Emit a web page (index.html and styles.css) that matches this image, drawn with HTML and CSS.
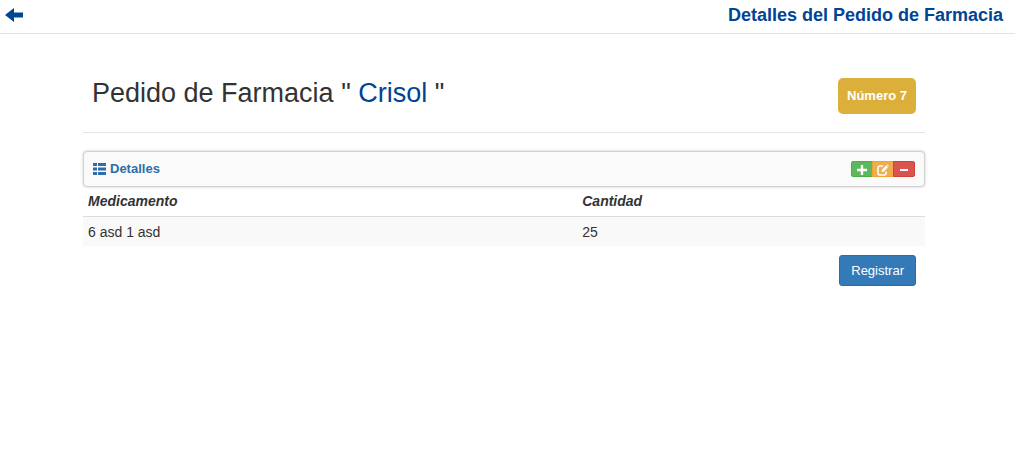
FILE: index.html
```
<!DOCTYPE html>
<html lang="es">
<head>
<meta charset="utf-8">
<title>Detalles del Pedido de Farmacia</title>
<link rel="stylesheet" href="styles.css">
</head>
<body>
<header class="topbar">
  <a class="back" href="#" aria-label="Volver">
    <svg width="18" height="14" viewBox="0 0 18 14" aria-hidden="true"><path d="M0 7L9 0V4.500H18V9.500H9V14Z" fill="currentColor"/></svg>
  </a>
  <h1 class="topbar-title">Detalles del Pedido de Farmacia</h1>
</header>
<main class="content">
  <div class="order-head">
    <h2 class="order-title">Pedido de Farmacia " <span class="order-name">Crisol</span> "</h2>
    <span class="order-number">Número 7</span>
  </div>
  <section class="panel">
    <h3 class="panel-title">
      <svg width="13" height="12" viewBox="0 0 13 12" aria-hidden="true"><path d="M0 0h4v3H0zM5 0h8v3H5zM0 4.500h4v3H0zM5 4.500h8v3H5zM0 9h4v3H0zM5 9h8v3H5z" fill="currentColor"/></svg>
      Detalles
    </h3>
    <div class="actions">
      <button type="button" class="action action-add" aria-label="Agregar"><svg width="12" height="12" viewBox="0 0 12 12" aria-hidden="true"><path d="M4.800 1h2.400v3.800H11v2.400H7.200V11H4.800V7.200H1V4.800h3.800z" fill="currentColor"/></svg></button>
      <button type="button" class="action action-edit" aria-label="Editar"><svg width="12" height="12" viewBox="0 0 12 12" aria-hidden="true"><path d="M6 2H3Q1 2 1 4v5q0 2 2 2h4q2 0 2-2V7.500" fill="none" stroke="currentColor" stroke-width="1.500"/><path d="M4.500 8l.6-2.500L9 1.600l1.900 1.900L7 7.400zM9.500 1.100l.7-.7 1.600 1.600-.6.700z" fill="currentColor"/></svg></button>
      <button type="button" class="action action-remove" aria-label="Quitar"><svg width="12" height="12" viewBox="0 0 12 12" aria-hidden="true"><path d="M2 5h8v2H2z" fill="currentColor"/></svg></button>
    </div>
  </section>
  <table class="items">
    <thead><tr><th class="col-name" scope="col">Medicamento</th><th scope="col">Cantidad</th></tr></thead>
    <tbody><tr><td>6 asd 1 asd</td><td>25</td></tr></tbody>
  </table>
  <div class="footer">
    <button type="submit" class="submit">Registrar</button>
  </div>
</main>
</body>
</html>
```
FILE: styles.css
```
* { box-sizing: border-box; }

body {
  margin: 0;
  background: #fff;
  color: #333;
  font: 14px/20px "Liberation Sans", Arial, sans-serif;
}

h1, h2, h3 { margin: 0; }

.topbar {
  display: flex;
  align-items: center;
  justify-content: space-between;
  padding: 5px 12px 8px 5px;
  border-bottom: 1px solid #e1e1e1;
}

.back {
  display: flex;
  color: #004494;
}

.topbar-title {
  color: #004494;
  font-size: 18px;
  line-height: 20px;
}

.content { padding: 44px 90px 0 83px; }

.order-head {
  display: flex;
  align-items: flex-start;
  justify-content: space-between;
  padding: 0 9px 18px;
  border-bottom: 1px solid #e5e5e5;
}

.order-title {
  font-size: 27px;
  font-weight: 400;
  line-height: 31px;
}

.order-name { color: #004494; }

.order-number {
  padding: 8px 9px;
  border-radius: 5px;
  background: #dcae3a;
  color: #fff;
  font-size: 13px;
  font-weight: 700;
}

.panel {
  display: flex;
  align-items: center;
  justify-content: space-between;
  margin-top: 18px;
  padding: 7px 9px;
  border: 1px solid #d2d2d2;
  border-radius: 4px;
  background: #fafafa;
  box-shadow: 0 0 3px #ccc;
}

.panel-title {
  display: flex;
  align-items: center;
  gap: 4px;
  color: #2f6ca9;
  font-size: 13px;
  line-height: 20px;
}

.actions { display: flex; }

.action {
  display: flex;
  align-items: center;
  justify-content: center;
  width: 22px;
  height: 16px;
  margin-left: -1px;
  padding: 1px 0 0;
  border: 1px solid;
  color: #fff;
}

.action-add {
  border-color: #4cae4c;
  border-radius: 2px 0 0 2px;
  background: #5cb85c;
}

.action-edit {
  border-color: #eea236;
  background: #f0ad4e;
}

.action-remove {
  border-color: #d43f3a;
  border-radius: 0 2px 2px 0;
  background: #d9534f;
}

.items {
  width: 100%;
  border-collapse: collapse;
  table-layout: fixed;
}

.items th {
  padding: 4px 5px 5px;
  border-bottom: 1px solid #ddd;
  font-style: italic;
  text-align: left;
}

.items td {
  padding: 5px 5px 4px;
  background: #f9f9f9;
}

.col-name { width: 58.7%; }

.footer {
  display: flex;
  justify-content: flex-end;
  padding: 9px 9px 0;
}

.submit {
  padding: 6px 11px;
  border: 1px solid #2e6da4;
  border-radius: 3px;
  background: #337ab7;
  color: #fff;
  font: 13px/17px "Liberation Sans", Arial, sans-serif;
}
```
